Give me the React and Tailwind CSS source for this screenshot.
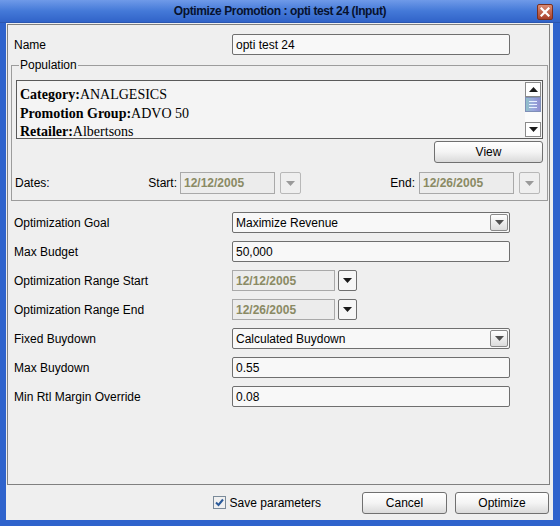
import React from "react";

const font = { fontFamily: '"Liberation Sans", Arial, sans-serif' };

function ArrowDown({ disabled, color }) {
  return (
    <svg width="9" height="5" viewBox="0 0 9 5">
      <path d="M0 0 L9 0 L4.5 5 Z" fill={color || (disabled ? "#9a9a9a" : "#1a1a1a")} />
    </svg>
  );
}

function ComboButton({ disabled }) {
  return (
    <div
      className={
        "w-[21px] h-[22px] shrink-0 flex items-center justify-center rounded-[2px] border " +
        (disabled ? "border-[#b8b8b8] bg-[#efefef]" : "border-[#6f6f6f] bg-[#f4f4f4]")
      }
    >
      <ArrowDown disabled={disabled} />
    </div>
  );
}

function DateField({ value, w = "w-[95px]", h = "h-[22px]" }) {
  return (
    <div
      className={`${w} ${h} shrink-0 border border-[#a9a9a9] bg-[#ececec] flex items-center pl-[3px] text-[12px] font-bold text-[#8a8a64]`}
    >
      {value}
    </div>
  );
}

function TextBox({ value }) {
  return (
    <div className="w-[278px] h-[21px] border border-[#6f6f6f] rounded-[2px] bg-[#f8f8f8] flex items-center pl-[3px] text-[12px] text-black">
      {value}
    </div>
  );
}

function SelectBox({ value }) {
  return (
    <div className="w-[278px] h-[21px] border border-[#6f6f6f] rounded-[2px] bg-[#f8f8f8] flex items-center pl-[3px] pr-[1px] text-[12px] text-black">
      <span className="flex-1">{value}</span>
      <div className="w-[18px] h-[17px] border border-[#8a8a8a] rounded-[2px] bg-gradient-to-b from-[#ffffff] to-[#dcdcdc] flex items-center justify-center">
        <ArrowDown color="#505050" />
      </div>
    </div>
  );
}

function FormRow({ label, children }) {
  return (
    <div className="flex items-center h-[21px] pl-[6px]">
      <span className="w-[218px] shrink-0 text-[12px] text-black">{label}</span>
      {children}
    </div>
  );
}

function Button({ children, w }) {
  return (
    <div
      className={`${w} h-[22px] border border-[#707070] rounded-[3px] bg-gradient-to-b from-[#ffffff] via-[#f4f4f4] to-[#dadada] flex items-center justify-center text-[12px] text-black`}
    >
      {children}
    </div>
  );
}

export default function App() {
  return (
    <div style={font} className="w-[560px] h-[526px] flex flex-col bg-[#2f63cc]">
      {/* Title bar */}
      <div className="relative h-[23px] shrink-0 flex items-center justify-center bg-gradient-to-b from-[#6f9ae8] via-[#4479d8] to-[#3163c8] border-b border-[#2a56b0]">
        <span className="text-[12px] font-bold text-[#07122e] tracking-[-0.4px]">
          Optimize Promotion : opti test 24 (Input)
        </span>
        <div className="absolute right-[7px] top-[4px] w-[16px] h-[16px] rounded-[2px] bg-gradient-to-b from-[#d98a74] to-[#a8402a] border border-[#7a3020] flex items-center justify-center">
          <svg width="10" height="10" viewBox="0 0 10 10">
            <path d="M1.5 1.5 L8.5 8.5 M8.5 1.5 L1.5 8.5" stroke="#ffffff" strokeWidth="2.2" strokeLinecap="square" />
          </svg>
        </div>
      </div>

      {/* Body */}
      <div className="flex-1 ml-[6px] mr-[7px] mb-[6px] bg-[#efefef] flex flex-col pt-[1px] pl-[1px] pr-[3px]">
        <div className="h-[461px] shrink-0 border border-[#808080] flex flex-col">
          <div className="mt-[9px]">
            <FormRow label="Name">
              <TextBox value="opti test 24" />
            </FormRow>
          </div>

          {/* Population */}
          <fieldset className="mt-[3px] ml-[3px] mr-[1px] border border-[#9c9c9c] px-[4px] pt-[8px] pb-[6px]">
            <legend className="ml-[3px] px-[1px] text-[12px] leading-[14px] text-black">Population</legend>
            <div
              className="h-[59px] border border-[#5a5a5a] bg-[#f4f4f4] flex"
              style={{ fontFamily: '"Liberation Serif", "Times New Roman", serif' }}
            >
              <div className="flex-1 overflow-hidden pl-[3px] pt-[4px] text-[14px] leading-[19px] text-black">
                <div><b>Category:</b>ANALGESICS</div>
                <div><b>Promotion Group:</b>ADVO 50</div>
                <div className="leading-[17px]"><b>Retailer:</b>Albertsons</div>
              </div>
              <div className="w-[16px] shrink-0 mr-[1px] my-[1px] flex flex-col bg-[#fbfbfb]">
                <div className="h-[15px] border border-[#8a8a8a] bg-white flex items-center justify-center">
                  <svg width="9" height="5" viewBox="0 0 9 5">
                    <path d="M0 5 L9 5 L4.5 0 Z" fill="#1a1a1a" />
                  </svg>
                </div>
                <div className="h-[15px] bg-gradient-to-r from-[#8fc0c8] via-[#9aa8dc] to-[#8f8fd0] border border-[#7f8fb8] flex flex-col items-center justify-center gap-[2px]">
                  <div className="w-[8px] h-[1px] bg-[#e8f0ff]" />
                  <div className="w-[8px] h-[1px] bg-[#e8f0ff]" />
                  <div className="w-[8px] h-[1px] bg-[#e8f0ff]" />
                </div>
                <div className="flex-1" />
                <div className="h-[15px] border border-[#8a8a8a] bg-white flex items-center justify-center">
                  <ArrowDown />
                </div>
              </div>
            </div>
            <div className="flex justify-end mt-[2px]">
              <Button w="w-[109px]">View</Button>
            </div>
            <div className="flex items-center h-[22px] mt-[9px] -ml-[1px] text-[12px] text-black">
              <span className="w-[130px] shrink-0">Dates:</span>
              <span className="w-[35px] shrink-0 text-right pr-[3px]">Start:</span>
              <DateField value="12/12/2005" />
              <div className="ml-[5px]">
                <ComboButton disabled />
              </div>
              <span className="flex-1 text-right pr-[4px]">End:</span>
              <DateField value="12/26/2005" />
              <div className="ml-[5px] mr-[3px]">
                <ComboButton disabled />
              </div>
            </div>
          </fieldset>

          {/* Options */}
          <div className="mt-[11px] flex flex-col gap-[8px]">
            <FormRow label="Optimization Goal">
              <SelectBox value="Maximize Revenue" />
            </FormRow>
            <FormRow label="Max Budget">
              <TextBox value="50,000" />
            </FormRow>
            <FormRow label="Optimization Range Start">
              <DateField value="12/12/2005" w="w-[103px]" h="h-[21px]" />
              <div className="ml-[3px] w-[19px] h-[21px] border border-[#6f6f6f] rounded-[2px] bg-[#f6f6f6] flex items-center justify-center">
                <ArrowDown />
              </div>
            </FormRow>
            <FormRow label="Optimization Range End">
              <DateField value="12/26/2005" w="w-[103px]" h="h-[21px]" />
              <div className="ml-[3px] w-[19px] h-[21px] border border-[#6f6f6f] rounded-[2px] bg-[#f6f6f6] flex items-center justify-center">
                <ArrowDown />
              </div>
            </FormRow>
            <FormRow label="Fixed Buydown">
              <SelectBox value="Calculated Buydown" />
            </FormRow>
            <FormRow label="Max Buydown">
              <TextBox value="0.55" />
            </FormRow>
            <FormRow label="Min Rtl Margin Override">
              <TextBox value="0.08" />
            </FormRow>
          </div>
        </div>

        {/* Footer */}
        <div className="flex-1 flex items-center justify-end pr-[1px]">
          <div className="flex items-center mr-[41px]">
            <div className="w-[13px] h-[13px] border border-[#7a8a99] bg-[#f0f0f0] flex items-center justify-center">
              <svg width="9" height="9" viewBox="0 0 9 9">
                <path d="M1 4.5 L3.5 7 L8 1.5" fill="none" stroke="#2a5a9a" strokeWidth="2" />
              </svg>
            </div>
            <span className="ml-[4px] text-[12px] text-black">Save parameters</span>
          </div>
          <Button w="w-[85px]">Cancel</Button>
          <div className="ml-[8px]">
            <Button w="w-[94px]">Optimize</Button>
          </div>
        </div>
      </div>
    </div>
  );
}
